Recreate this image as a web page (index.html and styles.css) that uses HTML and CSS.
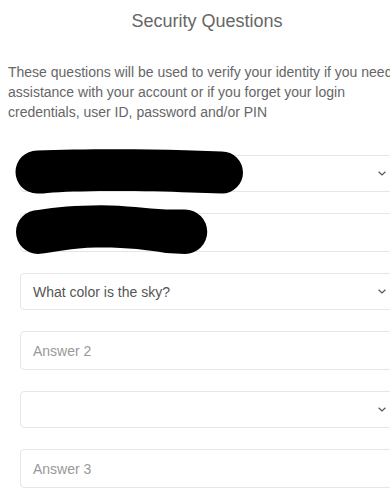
FILE: index.html
```html
<!DOCTYPE html>
<html lang="en">
<head>
<meta charset="utf-8">
<title>Security Questions</title>
<link rel="stylesheet" href="styles.css">
</head>
<body>
<main class="page">
  <h1 class="title">Security Questions</h1>
  <p class="intro">These questions will be used to verify your identity if you need assistance with your account or if you forget your login credentials, user ID, password and/or PIN</p>
  <form class="fields">
    <div class="field select">
      <span class="value"></span>
      <svg class="chev" width="8" height="5" viewBox="0 0 8 5"><path d="M0.6 0.7 L4 4 L7.4 0.7" fill="none" stroke="#555" stroke-width="1.2"/></svg>
      <svg class="redact r1" width="229" height="45" viewBox="0 0 229 45"><path d="M22 1.5 C60 0 120 -0.5 170 1.2 L207 2.5 A1 1 0 0 1 207 44.5 L175 43.5 C130 41.5 70 41.5 38 43.5 C30 44.5 26 44.5 22 44.5 A1 1 0 0 1 22 1.5 Z" fill="#000"/></svg>
    </div>
    <div class="field input">
      <span class="placeholder"></span>
      <svg class="redact r2" width="192" height="50" viewBox="0 0 192 50"><path d="M22 5 C40 2 60 0.5 85 0.3 C110 0.5 130 3.5 150 4.5 L169 4.5 A1 1 0 0 1 169 49 L150 48 C125 44 110 42.5 80 42.5 C55 43 40 47 22 49 A1 1 0 0 1 22 5 Z" fill="#000"/></svg>
    </div>
    <div class="field select">
      <span class="value">What color is the sky?</span>
      <svg class="chev" width="8" height="5" viewBox="0 0 8 5"><path d="M0.6 0.7 L4 4 L7.4 0.7" fill="none" stroke="#555" stroke-width="1.2"/></svg>
    </div>
    <div class="field input">
      <span class="placeholder">Answer 2</span>
    </div>
    <div class="field select">
      <span class="value"></span>
      <svg class="chev" width="8" height="5" viewBox="0 0 8 5"><path d="M0.6 0.7 L4 4 L7.4 0.7" fill="none" stroke="#555" stroke-width="1.2"/></svg>
    </div>
    <div class="field input">
      <span class="placeholder">Answer 3</span>
    </div>
  </form>
</main>
</body>
</html>
```
FILE: styles.css
```css
html {
  overflow: hidden;
  background: #fff;
}
body {
  margin: 0;
  font-family: "Liberation Sans", Arial, sans-serif;
  color: #666;
}
.page {
  width: 398px;
  margin-left: 8px;
}
.title {
  margin: 0;
  padding-top: 10px;
  font-size: 18px;
  line-height: 22px;
  font-weight: normal;
  text-align: center;
  color: #666;
}
.intro {
  margin: 30px 0 0;
  font-size: 14px;
  line-height: 20px;
  color: #666;
}
.fields {
  display: flex;
  flex-direction: column;
  gap: 21px;
  margin: 33px 12px 0;
}
.field {
  position: relative;
  display: flex;
  align-items: center;
  justify-content: space-between;
  box-sizing: border-box;
  border: 1px solid #e6e6e6;
  border-radius: 4px;
  padding: 0 7px 0 12px;
  font-size: 14px;
}
.select {
  height: 37px;
}
.input {
  height: 39px;
}
.value {
  color: #555;
}
.placeholder {
  color: #999;
}
.chev {
  display: block;
}
.redact {
  position: absolute;
}
.r1 {
  left: -6px;
  top: -7px;
}
.r2 {
  left: -5px;
  top: -9px;
}
```
